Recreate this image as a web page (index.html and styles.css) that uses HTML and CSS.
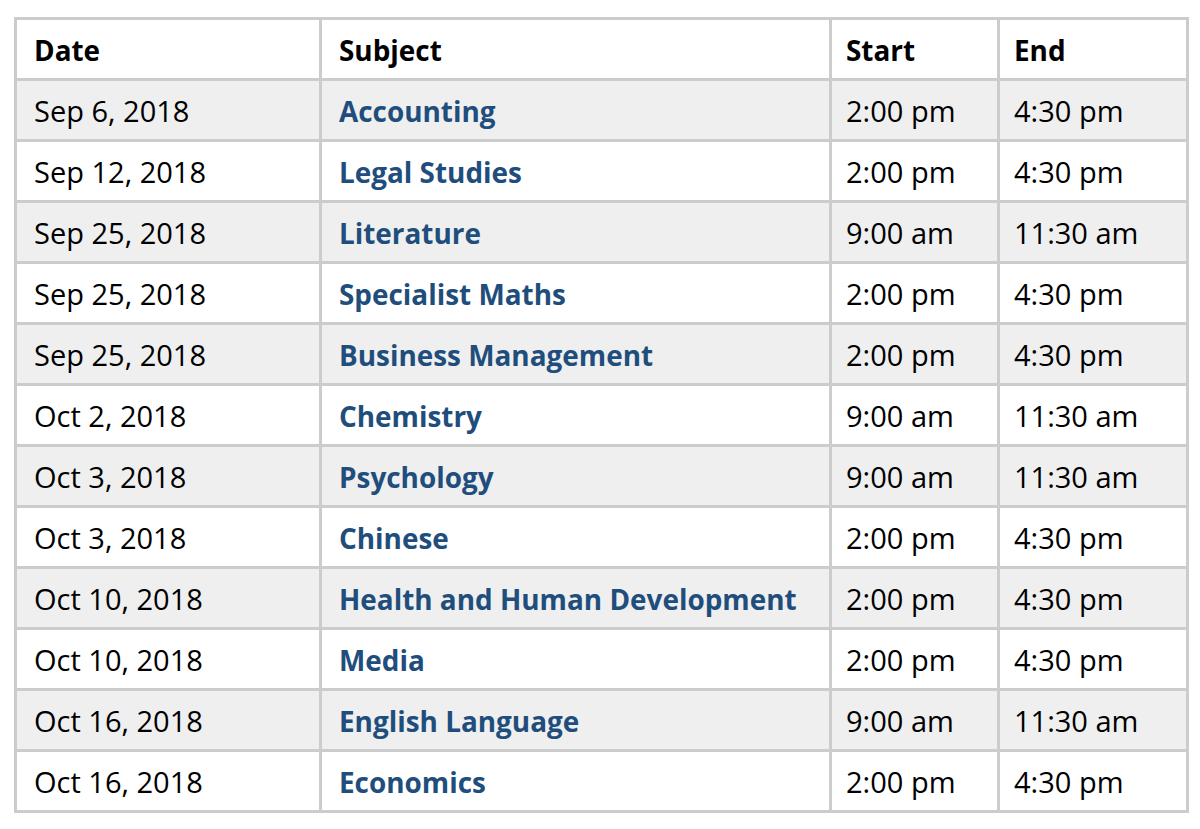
FILE: index.html
```html
<!DOCTYPE html>
<html lang="en">
<head>
<meta charset="utf-8">
<title>Exam timetable</title>
<link rel="stylesheet" href="styles.css">
</head>
<body>
<div class="timetable" role="table">
  <div class="row head" role="row">
    <div class="cell" role="columnheader">Date</div>
    <div class="cell" role="columnheader">Subject</div>
    <div class="cell time" role="columnheader">Start</div>
    <div class="cell time" role="columnheader">End</div>
  </div>
  <div class="row alt" role="row">
    <div class="cell">Sep 6, 2018</div><div class="cell"><a class="subject" href="#">Accounting</a></div><div class="cell time">2:00 pm</div><div class="cell time">4:30 pm</div>
  </div>
  <div class="row" role="row">
    <div class="cell">Sep 12, 2018</div><div class="cell"><a class="subject" href="#">Legal Studies</a></div><div class="cell time">2:00 pm</div><div class="cell time">4:30 pm</div>
  </div>
  <div class="row alt" role="row">
    <div class="cell">Sep 25, 2018</div><div class="cell"><a class="subject" href="#">Literature</a></div><div class="cell time">9:00 am</div><div class="cell time">11:30 am</div>
  </div>
  <div class="row" role="row">
    <div class="cell">Sep 25, 2018</div><div class="cell"><a class="subject" href="#">Specialist Maths</a></div><div class="cell time">2:00 pm</div><div class="cell time">4:30 pm</div>
  </div>
  <div class="row alt" role="row">
    <div class="cell">Sep 25, 2018</div><div class="cell"><a class="subject" href="#">Business Management</a></div><div class="cell time">2:00 pm</div><div class="cell time">4:30 pm</div>
  </div>
  <div class="row" role="row">
    <div class="cell">Oct 2, 2018</div><div class="cell"><a class="subject" href="#">Chemistry</a></div><div class="cell time">9:00 am</div><div class="cell time">11:30 am</div>
  </div>
  <div class="row alt" role="row">
    <div class="cell">Oct 3, 2018</div><div class="cell"><a class="subject" href="#">Psychology</a></div><div class="cell time">9:00 am</div><div class="cell time">11:30 am</div>
  </div>
  <div class="row" role="row">
    <div class="cell">Oct 3, 2018</div><div class="cell"><a class="subject" href="#">Chinese</a></div><div class="cell time">2:00 pm</div><div class="cell time">4:30 pm</div>
  </div>
  <div class="row alt" role="row">
    <div class="cell">Oct 10, 2018</div><div class="cell"><a class="subject" href="#">Health and Human Development</a></div><div class="cell time">2:00 pm</div><div class="cell time">4:30 pm</div>
  </div>
  <div class="row" role="row">
    <div class="cell">Oct 10, 2018</div><div class="cell"><a class="subject" href="#">Media</a></div><div class="cell time">2:00 pm</div><div class="cell time">4:30 pm</div>
  </div>
  <div class="row alt" role="row">
    <div class="cell">Oct 16, 2018</div><div class="cell"><a class="subject" href="#">English Language</a></div><div class="cell time">9:00 am</div><div class="cell time">11:30 am</div>
  </div>
  <div class="row" role="row">
    <div class="cell">Oct 16, 2018</div><div class="cell"><a class="subject" href="#">Economics</a></div><div class="cell time">2:00 pm</div><div class="cell time">4:30 pm</div>
  </div>
</div>
</body>
</html>
```

FILE: styles.css
```css
html, body {
  margin: 0;
  padding: 0;
  background: #ffffff;
}

body {
  padding: 17px 0 0 14px;
  font-family: "Open Sans", "Noto Sans", sans-serif;
  font-size: 29px;
  color: #000000;
}

.timetable {
  display: grid;
  grid-template-columns: 302px 507px 165px 186px;
  grid-auto-rows: 58px;
  gap: 3px;
  padding: 3px;
  width: max-content;
  background: #cccccc;
}

.row {
  display: contents;
}

.cell {
  box-sizing: border-box;
  height: 58px;
  display: flex;
  align-items: center;
  padding: 0 0 0 17px;
  background: #ffffff;
  white-space: nowrap;
  overflow: hidden;
}

.cell.time {
  padding-left: 14px;
}

.row.alt .cell {
  background: #efefef;
}

.row.head .cell {
  font-weight: 700;
  font-size: 27.9px;
  padding-top: 1px;
}

.subject {
  color: #1f4e7d;
  font-weight: 700;
  font-size: 27.9px;
  text-decoration: none;
  position: relative;
  top: 1px;
}
```
